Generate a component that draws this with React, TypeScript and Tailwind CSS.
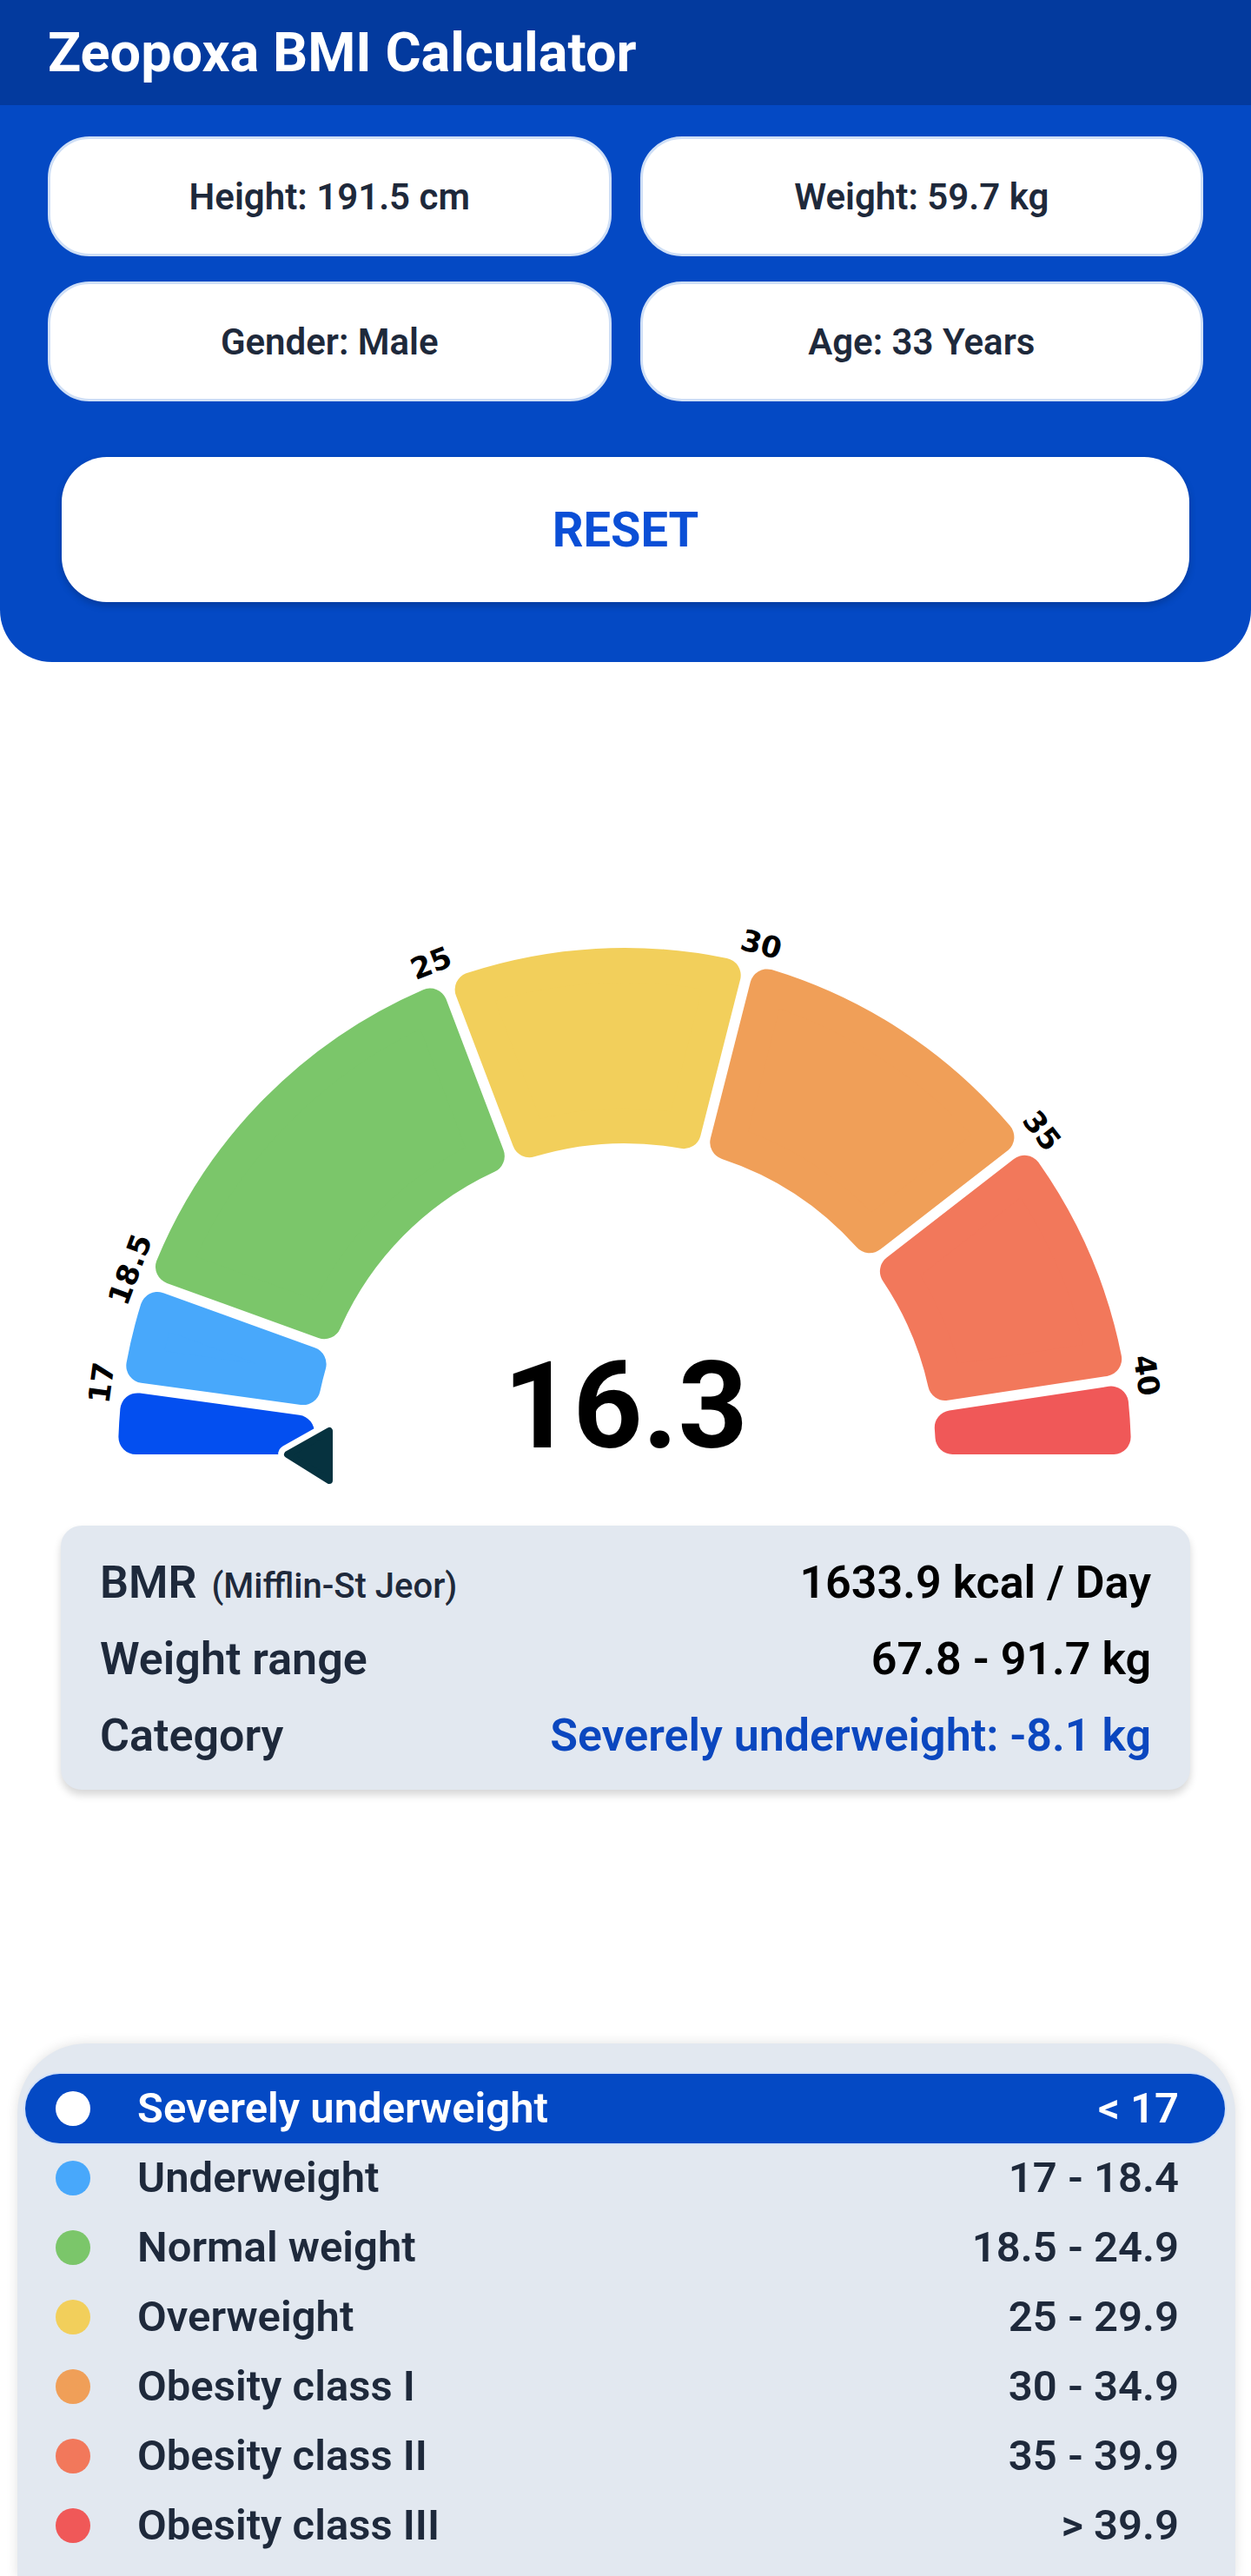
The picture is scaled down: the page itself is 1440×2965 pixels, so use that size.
import clsx from 'clsx';

const CX = 719;
const CY = 675;
const R_IN = 358;
const R_OUT = 583;
const CORNER = 20;
const GAP = 6;

const segments = [
  { from: 0, to: 7.8, color: '#034ff0' },
  { from: 7.8, to: 19.9, color: '#48a8fb' },
  { from: 19.9, to: 69.2, color: '#7bc66a' },
  { from: 69.2, to: 104.3, color: '#f2cf5b' },
  { from: 104.3, to: 142.2, color: '#f09f58' },
  { from: 142.2, to: 171.4, color: '#f2785b' },
  { from: 171.4, to: 180, color: '#f05858' },
];

const ticks = [
  { label: '17', at: 7.8 },
  { label: '18.5', at: 20.5 },
  { label: '25', at: 68.5 },
  { label: '30', at: 105 },
  { label: '35', at: 142.2 },
  { label: '40', at: 171.4 },
];

const categories = [
  { name: 'Severely underweight', range: '< 17', color: '#ffffff', active: true },
  { name: 'Underweight', range: '17 - 18.4', color: '#48a8fb' },
  { name: 'Normal weight', range: '18.5 - 24.9', color: '#7bc66a' },
  { name: 'Overweight', range: '25 - 29.9', color: '#f2cf5b' },
  { name: 'Obesity class I', range: '30 - 34.9', color: '#f09f58' },
  { name: 'Obesity class II', range: '35 - 39.9', color: '#f2785b' },
  { name: 'Obesity class III', range: '> 39.9', color: '#f05858' },
];

// point at radius r on the arc, shifted sideways by d (perpendicular to the radius)
function pt(r: number, deg: number, d: number) {
  const t = (deg * Math.PI) / 180;
  const s = Math.sqrt(r * r - d * d);
  const x = CX - s * Math.cos(t) + d * Math.sin(t);
  const y = CY - s * Math.sin(t) - d * Math.cos(t);
  return `${x.toFixed(1)} ${y.toFixed(1)}`;
}

function segmentPath(from: number, to: number) {
  const d0 = (from === 0 ? 0 : GAP) + CORNER;
  const d1 = (to === 180 ? 0 : GAP) + CORNER;
  const ro = R_OUT - CORNER;
  const ri = R_IN + CORNER;
  return `M${pt(ro, from, d0)} A${ro} ${ro} 0 0 1 ${pt(ro, to, -d1)} L${pt(ri, to, -d1)} A${ri} ${ri} 0 0 0 ${pt(ri, from, d0)} Z`;
}

function Gauge() {
  const needle = '331 675 379 648 379 705';
  return (
    <svg className="block mt-[237px]" width={1440} height={730} viewBox="0 0 1440 730">
      {segments.map((s) => (
        <path
          key={s.from}
          d={segmentPath(s.from, s.to)}
          fill={s.color}
          stroke={s.color}
          strokeWidth={CORNER * 2}
          strokeLinejoin="round"
        />
      ))}
      {ticks.map((t) => {
        const rad = (t.at * Math.PI) / 180;
        const x = CX - 608 * Math.cos(rad);
        const y = CY - 608 * Math.sin(rad);
        return (
          <text
            key={t.label}
            x={x}
            y={y}
            transform={`rotate(${t.at - 90} ${x} ${y})`}
            textAnchor="middle"
            dominantBaseline="central"
            fontFamily="'DejaVu Sans', sans-serif"
            fontWeight={700}
            fontSize={34}
            fill="#000"
          >
            {t.label}
          </text>
        );
      })}
      <polygon points={needle} fill="#fff" stroke="#fff" strokeWidth={22} strokeLinejoin="round" />
      <polygon points={needle} fill="#06323f" stroke="#06323f" strokeWidth={8} strokeLinejoin="round" />
      <text
        x={720}
        y={667}
        textAnchor="middle"
        fontFamily="Roboto, sans-serif"
        fontWeight={700}
        fontSize={140}
        fill="#000"
      >
        16.3
      </text>
    </svg>
  );
}

export default function App() {
  const inputs = ['Height: 191.5 cm', 'Weight: 59.7 kg', 'Gender: Male', 'Age: 33 Years'];

  return (
    <div className="w-[1440px] bg-white font-['Roboto','Noto_Sans',sans-serif] overflow-hidden">
      <header className="h-[121px] bg-[#033a9e] pl-[55px] flex items-center">
        <h1 className="text-[63px] font-bold text-white leading-none">Zeopoxa BMI Calculator</h1>
      </header>

      <div className="bg-[#0449c4] rounded-b-[60px] px-[55px] pt-[36px] pb-[69px]">
        <div className="grid grid-cols-2 gap-x-[33px] gap-y-[29px]">
          {inputs.map((label) => (
            <button
              key={label}
              type="button"
              className="h-[138px] rounded-[48px] bg-white border-[3px] border-[#cfdff6] flex items-center justify-center text-[42px] font-semibold text-[#1e293b]"
            >
              {label}
            </button>
          ))}
        </div>
        <button
          type="button"
          className="block mt-[64px] mx-[16px] w-[calc(100%-32px)] h-[167px] rounded-[52px] bg-white shadow-[0_4px_8px_rgba(0,0,0,0.2)] text-[56px] font-bold text-[#0b4fd6]"
        >
          RESET
        </button>
      </div>

      <Gauge />

      <div className="mx-[70px] mt-[27px] rounded-[24px] bg-[#e2e8f0] px-[45px] pt-[22px] pb-[18px] shadow-[0_6px_10px_rgba(0,0,0,0.16)] text-[52px] font-semibold">
        <div className="h-[88px] flex items-center justify-between">
          <span className="text-[#1e293b]">
            BMR <span className="text-[40px] font-medium ml-[4px]">(Mifflin-St Jeor)</span>
          </span>
          <span className="text-black">1633.9 kcal / Day</span>
        </div>
        <div className="h-[88px] flex items-center justify-between">
          <span className="text-[#1e293b]">Weight range</span>
          <span className="text-black">67.8 - 91.7 kg</span>
        </div>
        <div className="h-[88px] flex items-center justify-between">
          <span className="text-[#1e293b]">Category</span>
          <span className="text-[#0b47bf]">Severely underweight: -8.1 kg</span>
        </div>
      </div>

      <div className="mt-[292px] ml-[20px] mr-[18px] rounded-t-[80px] bg-[#e2e8f0] pt-[35px] pl-[9px] pr-[12px] pb-[20px] shadow-[0_0_14px_rgba(0,0,0,0.12)]">
        {categories.map((c) => (
          <div
            key={c.name}
            className={clsx(
              'h-[80px] rounded-full flex items-center pl-[35px] pr-[53px] text-[49px] font-semibold',
              c.active ? 'bg-[#0449c4] text-white ring-2 ring-[#d3e2f8]' : 'text-[#1e293b]'
            )}
          >
            <span className="w-[40px] h-[40px] rounded-full shrink-0" style={{ backgroundColor: c.color }} />
            <span className="ml-[54px] flex-1">{c.name}</span>
            <span>{c.range}</span>
          </div>
        ))}
      </div>
    </div>
  );
}
